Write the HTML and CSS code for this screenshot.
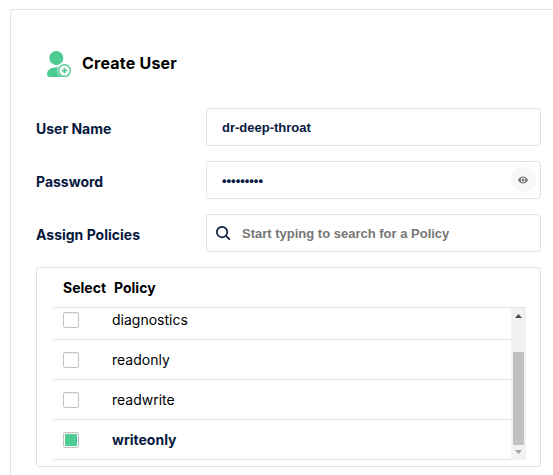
FILE: index.html
```html
<!DOCTYPE html>
<html lang="en">
<head>
<meta charset="utf-8">
<title>Create User</title>
<link rel="stylesheet" href="styles.css">
</head>
<body>
<main class="panel">
  <header class="heading">
    <svg class="user-icon" viewBox="0 0 24 26" width="24" height="26">
      <ellipse cx="9.3" cy="7.1" rx="7" ry="7.1"/>
      <path d="M3 26C1 26 0 24.7 0 23c0-4 4-6.800 9.300-6.800 4 0 7 1.400 8.500 3.800V26z"/>
      <circle class="badge-gap" cx="17.500" cy="19.600" r="7"/>
      <circle cx="17.500" cy="19.600" r="6.500"/>
      <circle class="badge-gap" cx="17.500" cy="19.600" r="5.100"/>
      <path d="M16.600 17h1.800v1.700h1.800v1.800h-1.800v1.800h-1.800v-1.800h-1.800v-1.800h1.800z"/>
    </svg>
    <h1>Create User</h1>
  </header>
  <form class="form">
    <div class="field">
      <label for="name">User Name</label>
      <div class="control"><input id="name" type="text" value="dr-deep-throat"></div>
    </div>
    <div class="field">
      <label for="password">Password</label>
      <div class="control">
        <input id="password" type="password" value="123456789">
        <button class="reveal" type="button" aria-label="Show password">
          <svg viewBox="0 0 10 8" width="10" height="8"><path fill-rule="evenodd" d="M5 .5C2.700.500.900 1.900 0 4c.900 2.100 2.700 3.500 5 3.500S9.100 6.100 10 4C9.100 1.900 7.300.500 5 .500zM5 1.600a2.400 2.400 0 1 1 0 4.800 2.400 2.400 0 0 1 0-4.800z"/><circle cx="5" cy="4" r="1.500"/></svg>
        </button>
      </div>
    </div>
    <div class="field">
      <label for="policy">Assign Policies</label>
      <div class="control">
        <svg class="search-icon" viewBox="0 0 15 15" width="14" height="14"><circle cx="6.500" cy="6.500" r="5.600"/><path d="M10.600 10.600l3.700 3.500"/></svg>
        <input id="policy" type="text" placeholder="Start typing to search for a Policy">
      </div>
    </div>
    <section class="policies">
      <div class="table-head"><span>Select</span><span>Policy</span></div>
      <div class="table-body">
        <div class="rows">
          <div class="row first"><span class="check"></span><span>diagnostics</span></div>
          <div class="row"><span class="check"></span><span>readonly</span></div>
          <div class="row"><span class="check"></span><span>readwrite</span></div>
          <div class="row selected"><span class="check"></span><span>writeonly</span></div>
        </div>
        <div class="scrollbar">
          <svg class="arrow-up" viewBox="0 0 7 4" width="7" height="4"><path d="M3.500 0L7 4H0z"/></svg>
          <div class="thumb"></div>
          <svg class="arrow-down" viewBox="0 0 7 4" width="7" height="4"><path d="M0 0h7L3.500 4z"/></svg>
        </div>
      </div>
    </section>
  </form>
</main>
</body>
</html>
```
FILE: styles.css
```css
* { box-sizing: border-box; }
body { margin: 0; padding: 9px 0 0 10px; background: #fff; color: #000; font-family: Inter, sans-serif; font-size: 14px; }
.panel { height: 466px; padding: 0 0 0 25px; border: solid #e2e2e2; border-width: 1px 0 0 1px; border-top-left-radius: 3px; }
.heading { display: flex; align-items: flex-start; gap: 11px; height: 98px; padding: 41px 0 0 11px; }
.user-icon { fill: #4ccb92; flex: none; }
.badge-gap { fill: #fff; }
h1 { margin: 2px 0 0; font-size: 16px; line-height: 20px; font-weight: 700; letter-spacing: .22px; }
.form { width: 505px; }
.field { display: flex; height: 38px; margin-bottom: 15px; }
label { width: 170px; padding-top: 3px; color: #07193e; font-weight: 700; line-height: 36px; }
.control { display: flex; align-items: center; width: 335px; padding: 0 4px 0 15px; border: 1px solid #e2e2e2; border-radius: 3px; }
input { flex: 1; min-width: 0; height: 34px; padding: 0; border: 0; outline: 0; background: transparent; color: #07193e; font: 700 13px "Liberation Sans", sans-serif; }
input::placeholder { color: #767676; opacity: 1; }
.reveal { display: flex; align-items: center; justify-content: center; flex: none; width: 25px; height: 25px; margin-bottom: 1px; padding: 0 1px 0 0; border: 0; border-radius: 50%; background: #f7f7f7; }
.reveal svg { margin-top: 1px; fill: #777; }
.search-icon { flex: none; margin: 0 12px 0 -6px; fill: none; stroke: #07193e; stroke-width: 1.800; stroke-linecap: round; }
.policies { width: 505px; height: 200px; padding: 0 14px 0 16px; border: 1px solid #e2e2e2; border-radius: 3px; }
.table-head { display: flex; gap: 8px; height: 40px; padding-left: 10px; border-bottom: 1px solid #e2e2e2; font-weight: 700; line-height: 40px; }
.table-body { display: flex; height: 152px; }
.rows { flex: 1; }
.row { display: flex; align-items: center; gap: 33px; height: 40px; padding-left: 10px; border-bottom: 1px solid #e2e2e2; }
.row.first { height: 32px; padding-bottom: 7px; line-height: 16px; }
.check { width: 16px; height: 16px; padding: 1px; border: 1px solid #c3c3c3; border-radius: 2px; box-shadow: inset 0 1px 1px #eee; }
.selected { color: #07193e; font-weight: 700; }
.selected .check { background: #4ccb92 content-box; }
.scrollbar { display: flex; flex-direction: column; align-items: center; width: 15px; background: #f1f1f1; }
.thumb { width: 11px; height: 93px; margin: 34px 0 5px; background: #c1c1c1; }
.arrow-up { flex: none; margin-top: 6px; fill: #505050; }
.arrow-down { flex: none; fill: #a3a3a3; }
```
